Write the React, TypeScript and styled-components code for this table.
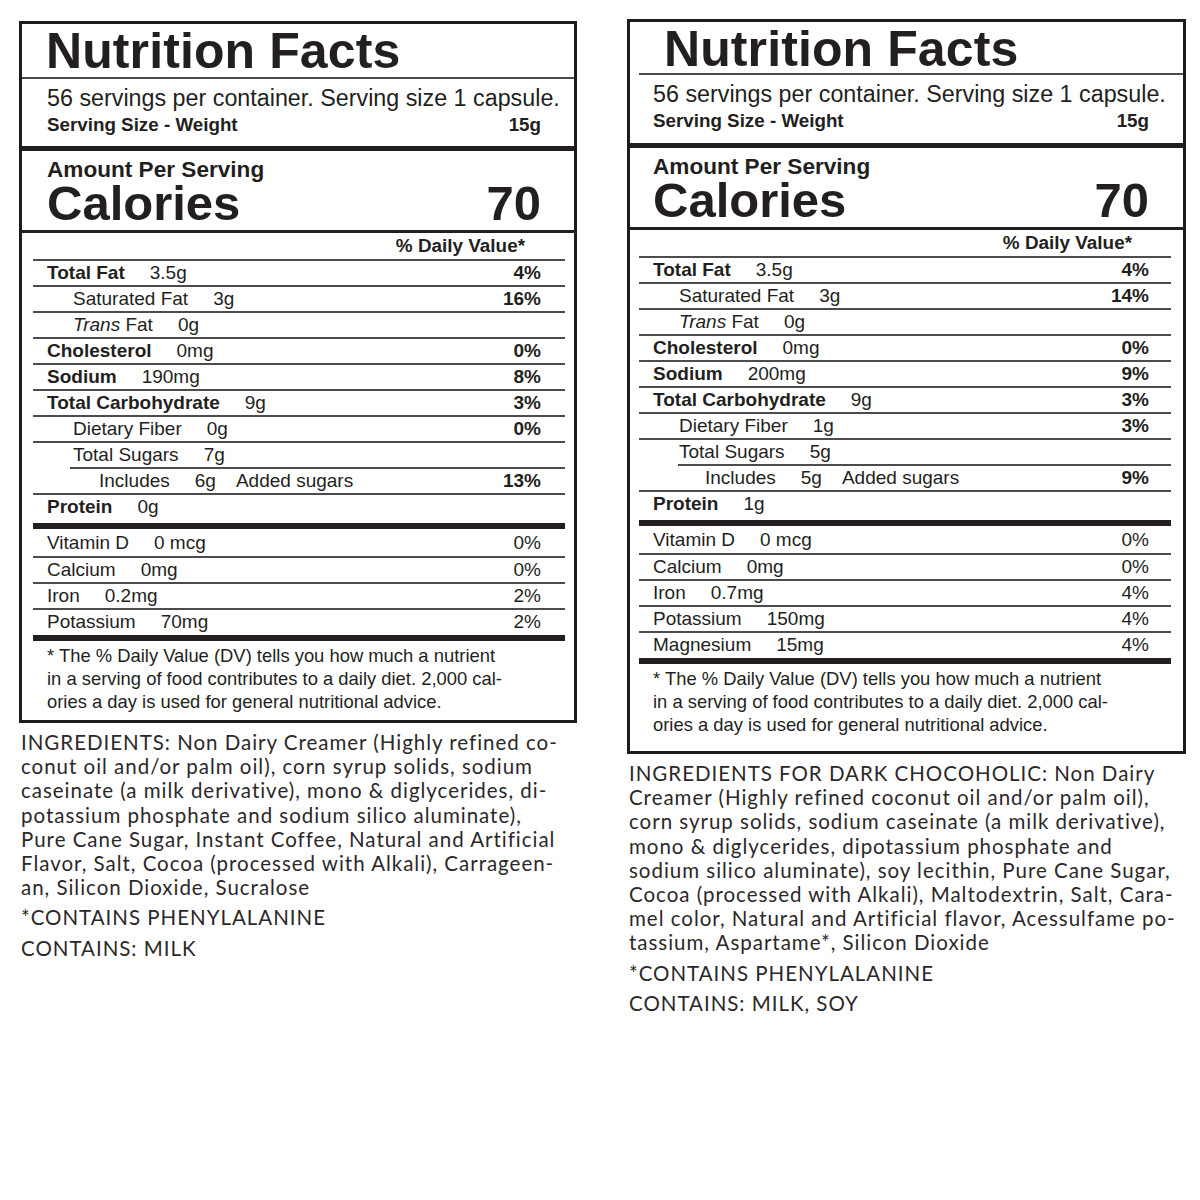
import React from "react";
import styled, { createGlobalStyle } from "styled-components";

const Global = createGlobalStyle`
  html, body { margin: 0; padding: 0; background: #ffffff; }
  body { font-family: "Liberation Sans", Arial, Helvetica, sans-serif; color: #231f20; }
`;

type Cfg = {
  top: number;
  left: number;
  width: number;
  titleH: number;
  titleIndent: number;
  titleLineInset: number;
  textPad: number;
  numPad: number;
  dvPad: number;
  rowInsetL: number;
  rowInsetR: number;
  rowNumPad: number;
  footBottom: number;
  servingH: number;
};

const LEFT: Cfg = {
  top: 21,
  left: 19,
  width: 558,
  titleH: 53,
  titleIndent: 24,
  titleLineInset: 0,
  textPad: 25,
  numPad: 33,
  dvPad: 49,
  rowInsetL: 11,
  rowInsetR: 9,
  rowNumPad: 24,
  footBottom: 6,
  servingH: 67,
};

const RIGHT: Cfg = {
  top: 19,
  left: 50,
  width: 559,
  titleH: 51,
  titleIndent: 34,
  titleLineInset: 9,
  textPad: 23,
  numPad: 34,
  dvPad: 51,
  rowInsetL: 9,
  rowInsetR: 12,
  rowNumPad: 22,
  footBottom: 14,
  servingH: 68,
};

const Page = styled.div`
  display: flex;
  align-items: flex-start;
  width: 1200px;
  min-height: 1200px;
  background: #fff;
`;

const Column = styled.div<{ $top: number; $left: number; $width: number }>`
  display: flex;
  flex-direction: column;
  margin-top: ${(p) => p.$top}px;
  margin-left: ${(p) => p.$left}px;
  width: ${(p) => p.$width}px;
`;

const Label = styled.section`
  border: 3px solid #1f1b1c;
  box-sizing: border-box;
  width: 100%;
  display: flex;
  flex-direction: column;
  background: #fff;
`;

const TitleBlock = styled.div<{ $h: number; $indent: number }>`
  height: ${(p) => p.$h}px;
  box-sizing: border-box;
  padding-top: 2px;
  padding-left: ${(p) => p.$indent}px;
`;

const Title = styled.h1`
  margin: 0;
  font-size: 50px;
  line-height: 50px;
  font-weight: 700;
  letter-spacing: 0.1px;
  color: #231f20;
`;

const ThinRule = styled.div<{ $inset?: number }>`
  height: 0;
  border-top: 2px solid #4e4b4c;
  margin-left: ${(p) => p.$inset ?? 0}px;
`;

const ThickBar = styled.div<{ $h: number; $insetL?: number; $insetR?: number }>`
  height: ${(p) => p.$h}px;
  background: #231f20;
  margin-left: ${(p) => p.$insetL ?? 0}px;
  margin-right: ${(p) => p.$insetR ?? 0}px;
`;

const ServingBlock = styled.div<{ $pad: number; $numPad: number; $h: number }>`
  height: ${(p) => p.$h}px;
  box-sizing: border-box;
  padding: 5px ${(p) => p.$numPad}px 0 ${(p) => p.$pad}px;
  display: flex;
  flex-direction: column;
`;

const ServingLine = styled.div`
  font-size: 23.3px;
  line-height: 28px;
  white-space: nowrap;
`;

const SplitLine = styled.div<{ $size: number; $lh: number }>`
  display: flex;
  justify-content: space-between;
  align-items: baseline;
  font-weight: 700;
  font-size: ${(p) => p.$size}px;
  line-height: ${(p) => p.$lh}px;
  white-space: nowrap;
`;

const CaloriesBlock = styled.div<{ $pad: number; $numPad: number }>`
  height: 79px;
  box-sizing: border-box;
  padding: 9px ${(p) => p.$numPad}px 0 ${(p) => p.$pad}px;
  display: flex;
  flex-direction: column;
`;

const AmountLine = styled.div`
  font-size: 22.6px;
  line-height: 20px;
  font-weight: 700;
`;

const DvHeader = styled.div<{ $pad: number }>`
  height: 26px;
  text-align: right;
  padding-right: ${(p) => p.$pad}px;
  font-size: 18.9px;
  line-height: 25px;
  font-weight: 700;
`;

const Rows = styled.div<{ $l: number; $r: number }>`
  display: flex;
  flex-direction: column;
  margin-left: ${(p) => p.$l}px;
  margin-right: ${(p) => p.$r}px;
`;

const Row = styled.div<{
  $indent: number;
  $lineInset: number;
  $numPad: number;
  $noLine?: boolean;
  $h: number;
}>`
  display: flex;
  align-items: baseline;
  box-sizing: border-box;
  height: ${(p) => p.$h}px;
  border-top: ${(p) => (p.$noLine ? "none" : "2px solid #4e4b4c")};
  margin-left: ${(p) => p.$lineInset}px;
  padding-left: ${(p) => 14 + p.$indent * 26 - p.$lineInset}px;
  padding-right: ${(p) => p.$numPad}px;
  padding-top: ${(p) => (p.$noLine ? 2 : 0)}px;
  font-size: 19px;
  line-height: 23px;
  white-space: nowrap;
`;

const Name = styled.span<{ $bold?: boolean }>`
  font-weight: ${(p) => (p.$bold ? 700 : 400)};
`;

const Amount = styled.span`
  margin-left: 25px;
  font-weight: 400;
`;

const Extra = styled.span`
  margin-left: 20px;
  font-weight: 400;
`;

const Pct = styled.span<{ $bold?: boolean }>`
  margin-left: auto;
  font-weight: ${(p) => (p.$bold ? 700 : 400)};
`;

const Footnote = styled.div<{ $pad: number; $bottom: number }>`
  padding: 3px 0 ${(p) => p.$bottom + 1}px ${(p) => p.$pad}px;
  font-size: 18.4px;
  line-height: 23px;
  display: flex;
  flex-direction: column;
  white-space: nowrap;
`;

const Ingredients = styled.div`
  margin-top: 7px;
  padding-left: 2px;
  font-family: Lato, "Open Sans", sans-serif;
  font-size: 20.5px;
  line-height: 24.2px;
  letter-spacing: 0.98px;
  color: #2b2829;
  display: flex;
  flex-direction: column;
`;

const Para = styled.p`
  margin: 0 0 6px 0;
  display: flex;
  flex-direction: column;
  white-space: nowrap;
`;

type Nutrient = {
  name: React.ReactNode;
  amt: string;
  pct?: string;
  bold?: boolean;
  indent?: number;
  extra?: string;
  lineInset?: number;
};

type Vit = { name: string; amt: string; pct: string };

type PanelData = {
  cfg: Cfg;
  nutrients: Nutrient[];
  vitamins: Vit[];
  ingredients: string[];
  contains: string;
};

const trans = (
  <>
    <i>Trans</i> Fat
  </>
);

const leftData: PanelData = {
  cfg: LEFT,
  nutrients: [
    { name: "Total Fat", amt: "3.5g", pct: "4%", bold: true },
    { name: "Saturated Fat", amt: "3g", pct: "16%", indent: 1 },
    { name: trans, amt: "0g", indent: 1 },
    { name: "Cholesterol", amt: "0mg", pct: "0%", bold: true },
    { name: "Sodium", amt: "190mg", pct: "8%", bold: true },
    { name: "Total Carbohydrate", amt: "9g", pct: "3%", bold: true },
    { name: "Dietary Fiber", amt: "0g", pct: "0%", indent: 1 },
    { name: "Total Sugars", amt: "7g", indent: 1 },
    { name: "Includes", amt: "6g", extra: "Added sugars", pct: "13%", indent: 2, lineInset: 37 },
    { name: "Protein", amt: "0g", bold: true },
  ],
  vitamins: [
    { name: "Vitamin D", amt: "0 mcg", pct: "0%" },
    { name: "Calcium", amt: "0mg", pct: "0%" },
    { name: "Iron", amt: "0.2mg", pct: "2%" },
    { name: "Potassium", amt: "70mg", pct: "2%" },
  ],
  ingredients: [
    "INGREDIENTS: Non Dairy Creamer (Highly refined co-",
    "conut oil and/or palm oil), corn syrup solids, sodium",
    "caseinate (a milk derivative), mono & diglycerides, di-",
    "potassium phosphate and sodium silico aluminate),",
    "Pure Cane Sugar, Instant Coffee, Natural and Artificial",
    "Flavor, Salt, Cocoa (processed with Alkali), Carrageen-",
    "an, Silicon Dioxide, Sucralose",
  ],
  contains: "CONTAINS: MILK",
};

const rightData: PanelData = {
  cfg: RIGHT,
  nutrients: [
    { name: "Total Fat", amt: "3.5g", pct: "4%", bold: true },
    { name: "Saturated Fat", amt: "3g", pct: "14%", indent: 1 },
    { name: trans, amt: "0g", indent: 1 },
    { name: "Cholesterol", amt: "0mg", pct: "0%", bold: true },
    { name: "Sodium", amt: "200mg", pct: "9%", bold: true },
    { name: "Total Carbohydrate", amt: "9g", pct: "3%", bold: true },
    { name: "Dietary Fiber", amt: "1g", pct: "3%", indent: 1 },
    { name: "Total Sugars", amt: "5g", indent: 1 },
    { name: "Includes", amt: "5g", extra: "Added sugars", pct: "9%", indent: 2, lineInset: 39 },
    { name: "Protein", amt: "1g", bold: true },
  ],
  vitamins: [
    { name: "Vitamin D", amt: "0 mcg", pct: "0%" },
    { name: "Calcium", amt: "0mg", pct: "0%" },
    { name: "Iron", amt: "0.7mg", pct: "4%" },
    { name: "Potassium", amt: "150mg", pct: "4%" },
    { name: "Magnesium", amt: "15mg", pct: "4%" },
  ],
  ingredients: [
    "INGREDIENTS FOR DARK CHOCOHOLIC: Non Dairy",
    "Creamer (Highly refined coconut oil and/or palm oil),",
    "corn syrup solids, sodium caseinate (a milk derivative),",
    "mono & diglycerides, dipotassium phosphate and",
    "sodium silico aluminate), soy lecithin, Pure Cane Sugar,",
    "Cocoa (processed with Alkali), Maltodextrin, Salt, Cara-",
    "mel color, Natural and Artificial flavor, Acessulfame po-",
    "tassium, Aspartame*, Silicon Dioxide",
  ],
  contains: "CONTAINS: MILK, SOY",
};

const footLines = [
  "* The % Daily Value (DV) tells you how much a nutrient",
  "in a serving of food contributes to a daily diet. 2,000 cal-",
  "ories a day is used for general nutritional advice.",
];

function Panel({ data }: { data: PanelData }) {
  const c = data.cfg;
  return (
    <Column $top={c.top} $left={c.left} $width={c.width}>
      <Label>
        <TitleBlock $h={c.titleH} $indent={c.titleIndent}>
          <Title>Nutrition Facts</Title>
        </TitleBlock>
        <ThinRule $inset={c.titleLineInset} />
        <ServingBlock $pad={c.textPad} $numPad={c.numPad} $h={c.servingH}>
          <ServingLine>56 servings per container. Serving size 1 capsule.</ServingLine>
          <SplitLine $size={18.8} $lh={26}>
            <span>Serving Size - Weight</span>
            <span>15g</span>
          </SplitLine>
        </ServingBlock>
        <ThickBar $h={5} />
        <CaloriesBlock $pad={c.textPad} $numPad={c.numPad}>
          <AmountLine>Amount Per Serving</AmountLine>
          <SplitLine $size={49} $lh={46}>
            <span>Calories</span>
            <span>70</span>
          </SplitLine>
        </CaloriesBlock>
        <ThickBar $h={3} />
        <DvHeader $pad={c.dvPad}>% Daily Value*</DvHeader>
        <Rows $l={c.rowInsetL} $r={c.rowInsetR}>
          {data.nutrients.map((n, i) => (
            <Row
              key={i}
              $indent={n.indent ?? 0}
              $lineInset={n.lineInset ?? 0}
              $numPad={c.rowNumPad}
              $h={i === data.nutrients.length - 1 ? 30 : 26}
            >
              <Name $bold={n.bold}>{n.name}</Name>
              <Amount>{n.amt}</Amount>
              {n.extra && <Extra>{n.extra}</Extra>}
              {n.pct && <Pct $bold>{n.pct}</Pct>}
            </Row>
          ))}
        </Rows>
        <ThickBar $h={6} $insetL={c.rowInsetL} $insetR={c.rowInsetR} />
        <Rows $l={c.rowInsetL} $r={c.rowInsetR}>
          {data.vitamins.map((v, i) => (
            <Row
              key={i}
              $indent={0}
              $lineInset={0}
              $numPad={c.rowNumPad}
              $noLine={i === 0}
              $h={i === 0 || i === data.vitamins.length - 1 ? 27 : 26}
            >
              <Name>{v.name}</Name>
              <Amount>{v.amt}</Amount>
              <Pct>{v.pct}</Pct>
            </Row>
          ))}
        </Rows>
        <ThickBar $h={6} $insetL={c.rowInsetL} $insetR={c.rowInsetR} />
        <Footnote $pad={c.textPad} $bottom={c.footBottom}>
          {footLines.map((l, i) => (
            <span key={i}>{l}</span>
          ))}
        </Footnote>
      </Label>
      <Ingredients>
        <Para>
          {data.ingredients.map((l, i) => (
            <span key={i}>{l}</span>
          ))}
        </Para>
        <Para>*CONTAINS PHENYLALANINE</Para>
        <Para>{data.contains}</Para>
      </Ingredients>
    </Column>
  );
}

export default function App() {
  return (
    <>
      <Global />
      <Page>
        <Panel data={leftData} />
        <Panel data={rightData} />
      </Page>
    </>
  );
}
